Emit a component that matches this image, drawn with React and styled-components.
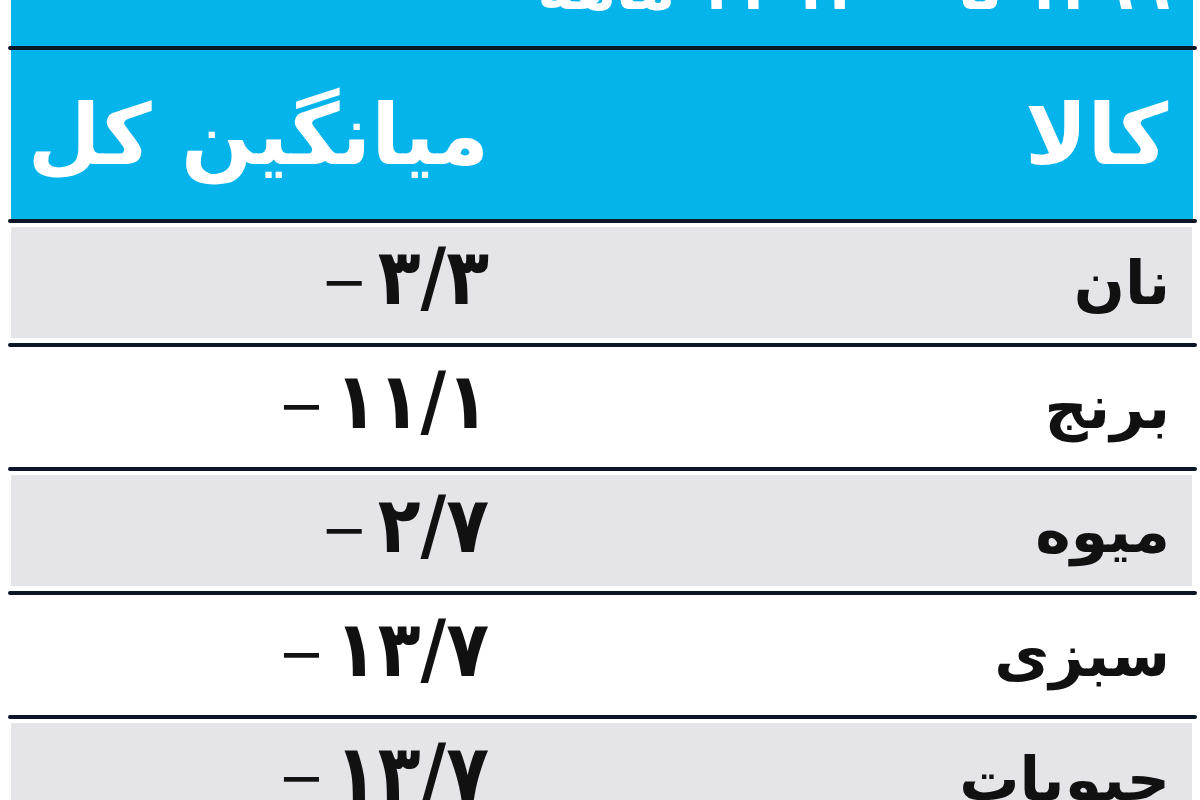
import styled, { createGlobalStyle } from 'styled-components';

const rows = [
    { name: 'نان', value: '۳/۳', shade: true },
    { name: 'برنج', value: '۱۱/۱', shade: false },
    { name: 'میوه', value: '۲/۷', shade: true },
    { name: 'سبزی', value: '۱۳/۷', shade: false },
    { name: 'حبوبات', value: '۱۳/۷', shade: true },
];

const App = () => {
    return (
        <>
            <GlobalStyle />
            <Page>
                {/* title strip, cut off at the top */}
                <TopBand>
                    <Title>۱۳۹۹ تا ۱۴۰۰ ۱۱ ماهه</Title>
                </TopBand>
                <Rule />
                {/* column headings */}
                <HeaderRow>
                    <HeadCell>کالا</HeadCell>
                    <HeadCell $value>میانگین کل</HeadCell>
                </HeaderRow>
                <Rule />
                {/* body */}
                {rows.map((row) => (
                    <Block key={row.name}>
                        <BodyRow $shade={row.shade}>
                            <NameCell>{row.name}</NameCell>
                            <ValueCell dir="ltr">
                                <Minus>−</Minus>
                                <Digits>{row.value}</Digits>
                            </ValueCell>
                        </BodyRow>
                        <Rule />
                    </Block>
                ))}
            </Page>
        </>
    );
};

export default App;

const GlobalStyle = createGlobalStyle`
    html, body {
        margin: 0;
        padding: 0;
        background: #ffffff;
        overflow: hidden;
    }
    body {
        font-family: "DejaVu Sans", sans-serif;
    }
`;

const Page = styled.div`
    display: flex;
    flex-direction: column;
    width: 1189px;
    height: 800px;
    margin-left: 8px;
    overflow: hidden;
    direction: rtl;
`;

const TopBand = styled.div`
    display: flex;
    flex-shrink: 0;
    align-items: flex-end;
    height: 46px;
    margin: 0 4px 0 3px;
    padding-right: 23px;
    background-color: #06b4ec;
    overflow: hidden;
`;

const Title = styled.div`
    margin-bottom: 28px;
    font-family: "DejaVu Sans", sans-serif;
    font-weight: 700;
    font-size: 60px;
    line-height: 1;
    color: #ffffff;
    white-space: nowrap;
`;

const Rule = styled.div`
    flex-shrink: 0;
    height: 4px;
    background-color: #0c1626;
    border-radius: 2px;
`;

const HeaderRow = styled.div`
    display: grid;
    flex-shrink: 0;
    grid-template-columns: 1fr 500px;
    align-items: center;
    height: 169px;
    margin: 0 4px 0 3px;
    background-color: #06b4ec;
`;

const HeadCell = styled.div`
    padding-right: ${(p) => (p.$value ? '22px' : '25px')};
    font-family: "DejaVu Sans", sans-serif;
    font-weight: 700;
    font-size: 84px;
    color: #ffffff;
    white-space: nowrap;
`;

const Block = styled.div`
    display: flex;
    flex-direction: column;
    flex-shrink: 0;
`;

const BodyRow = styled.div`
    display: grid;
    grid-template-columns: 1fr 500px;
    align-items: center;
    height: 111px;
    margin: 4px 5px 5px 3px;
    background-color: ${(p) => (p.$shade ? '#e5e5e9' : '#ffffff')};
`;

const NameCell = styled.div`
    padding-right: 22px;
    font-family: "DejaVu Sans", sans-serif;
    font-weight: 700;
    font-size: 60px;
    color: #111111;
    white-space: nowrap;
`;

const ValueCell = styled.div`
    display: flex;
    justify-content: flex-end;
    align-items: center;
    padding-right: 22px;
    padding-bottom: 12px;
`;

const Minus = styled.span`
    margin-right: 10px;
    padding-top: 10px;
    font-family: "DejaVu Sans", sans-serif;
    font-weight: 400;
    font-size: 56px;
    color: #111111;
`;

const Digits = styled.span`
    font-family: "DejaVu Sans Condensed", "DejaVu Sans", sans-serif;
    font-weight: 700;
    font-size: 78px;
    color: #111111;
    white-space: nowrap;
`;
